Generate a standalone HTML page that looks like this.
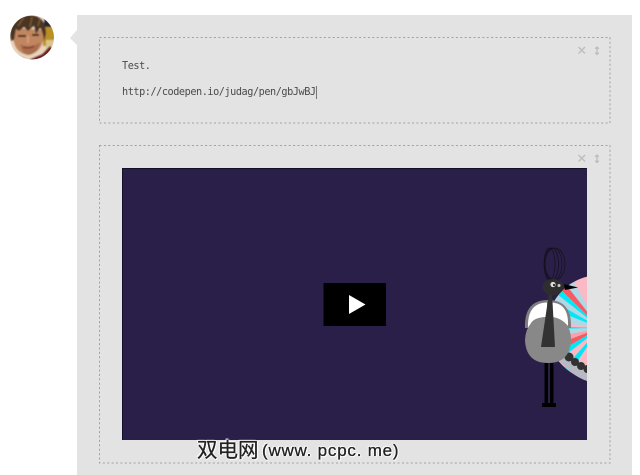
<!DOCTYPE html>
<html>
<head>
<meta charset="utf-8">
<style>
html,body{margin:0;padding:0;background:#fff;width:640px;height:475px;overflow:hidden}
body{position:relative}
.abs{position:absolute}
.panel{left:77px;top:15px;width:555px;height:460px;background:#e3e3e3}
.txt{font-family:"DejaVu Sans Mono",monospace;font-size:10.2px;letter-spacing:-0.44px;line-height:12px;color:#4a4a4a;white-space:pre}
.wm{font-family:"Liberation Sans","Noto Sans CJK SC",sans-serif;color:#222;white-space:pre;-webkit-text-stroke:0.3px #222;text-shadow:1px 0 0 #fff,-1px 0 0 #fff,0 1px 0 #fff,0 -1px 0 #fff,1px 1px 1px #fff,-1px -1px 1px #fff}
</style>
</head>
<body>
<div class="abs panel"></div>
<svg class="abs" style="left:0;top:0" width="80" height="70" viewBox="0 0 80 70">
  <polygon points="77,30 70,38 77,45" fill="#e3e3e3"/>
  <defs>
    <clipPath id="av"><circle cx="32" cy="37.500" r="22"/></clipPath>
    <filter id="bl" x="-10%" y="-10%" width="120%" height="120%"><feGaussianBlur stdDeviation="0.8"/></filter>
  </defs>
  <g clip-path="url(#av)">
    <g filter="url(#bl)">
      <rect x="8" y="13" width="48" height="50" fill="#e8d4bd"/>
      <rect x="43" y="26" width="13" height="20" fill="#bb9022"/>
      <rect x="44" y="14" width="12" height="13" fill="#20283a"/>
      <rect x="46" y="40" width="10" height="10" fill="#d9c48c"/>
      <path d="M14 54 L28 60 L42 54 L50 46 L56 52 L56 64 L10 64Z" fill="#6e1a1c"/>
      <path d="M13 34 Q13 53 28 55 Q42 53 44 36 L44 30 L14 28Z" fill="#c08660"/>
      <path d="M20 44 Q30 50 40 42 Q38 54 28 55 Q22 54 20 44Z" fill="#a86e4c"/>
      <path d="M10 36 Q9 17 28 15 Q46 14 46 34 L44 41 Q43 31 40 28 L36 34 L34 26 L28 31 L24 27 L19 31 L16 29 L14 40 L11 41Z" fill="#4a3420"/>
      <path d="M18 26 L24 17 M30 27 L32 17 M38 26 L40 19" stroke="#7a5a30" stroke-width="1.500"/>
      <path d="M18 36 h8 M32 35 h7" stroke="#3a261a" stroke-width="2"/>
      <path d="M28 36 v7" stroke="#d49c78" stroke-width="2"/>
      <path d="M23 47 q6 2 11 -1" stroke="#8a4038" stroke-width="1.800" fill="none"/>
    </g>
  </g>
</svg>

<svg class="abs" style="left:0;top:0" width="640" height="475" viewBox="0 0 640 475">
  <g fill="none" stroke="#a0a0a0" stroke-width="1" stroke-dasharray="2 2.400">
    <rect x="99.500" y="37.500" width="510.500" height="85.500"/>
    <rect x="99.500" y="145.500" width="510.500" height="317.500"/>
  </g>
  <g fill="none" stroke="#bcbcbc" stroke-width="1.300">
    <path d="M578.500 47l6.500 6.500M585 47l-6.500 6.500"/>
    <path d="M578.500 155l6.500 6.500M585 155l-6.500 6.500"/>
    <path d="M597 47v7.500M595.200 48.800l1.800-1.800 1.800 1.800M595.200 52.700l1.800 1.800 1.800-1.800"/>
    <path d="M597 155v7.500M595.200 156.800l1.800-1.800 1.800 1.800M595.200 160.700l1.800 1.800 1.800-1.800"/>
  </g>
</svg>

<div class="abs txt" style="left:122px;top:61px">Test.</div>
<div class="abs txt" style="left:122px;top:87px">http://codepen.io/judag/pen/gbJwBJ</div>
<div class="abs" style="left:316px;top:86px;width:1px;height:13px;background:#777"></div>

<svg class="abs" style="left:122px;top:168px" width="465" height="272" viewBox="122 168 465 272">
  <defs>
    <clipPath id="fan"><circle cx="600" cy="328" r="53"/></clipPath>
    <filter id="b2" x="-5%" y="-5%" width="110%" height="110%"><feGaussianBlur stdDeviation="0.3"/></filter>
  </defs>
  <rect x="122" y="168" width="465" height="272" fill="#2a1f49"/>
  <path d="M122.500 440V168.500H586.500" fill="none" stroke="#15102a" stroke-width="1"/>
  <rect x="323.500" y="283" width="62.500" height="43" fill="#000"/>
  <polygon points="349,295 349,314 365.500,304.500" fill="#fff"/>

  <g filter="url(#b2)">
  <g clip-path="url(#fan)">
    <rect x="540" y="268" width="60" height="125" fill="#f9b9c5"/>
    <polygon points="600,328 570,276 563,281" fill="#aed8e6"/>
    <polygon points="600,328 563,281 557,286" fill="#f55a62"/>
    <polygon points="600,328 557,286 553,291" fill="#00e8f5"/>
    <polygon points="600,328 553,291 548,298" fill="#aed8e6"/>
    <polygon points="600,328 548,298 544,306" fill="#00e8f5"/>
    <polygon points="600,328 544,306 541,320" fill="#aed8e6"/>
    <polygon points="600,328 540,326 540,329" fill="#00e8f5"/>
    <polygon points="600,328 540,329 541,340" fill="#aed8e6"/>
    <polygon points="600,328 541,340 544,349" fill="#f9a0a8"/>
    <polygon points="600,328 544,349 548,358" fill="#f55a62"/>
    <polygon points="600,328 548,358 553,365" fill="#00e8f5"/>
    <polygon points="600,328 560,373 566,378" fill="#00e8f5"/>
  </g>
  <path d="M558 359 Q570 375 587 381 L587 370 Q574 364 566 352Z" fill="#b9b9c4"/>
  <g fill="#333">
    <circle cx="569" cy="357" r="4.500"/><circle cx="575" cy="362" r="4"/>
    <circle cx="581" cy="366" r="4"/><path d="M587 365a3.500 4 0 0 0 0 8z"/>
  </g>

  <g fill="none" stroke="#16121f" stroke-width="0.700">
    <ellipse cx="555" cy="264" rx="10" ry="16"/>
    <ellipse cx="553.500" cy="264" rx="8.500" ry="16"/>
    <ellipse cx="551.500" cy="264" rx="7" ry="16"/>
    <ellipse cx="549.500" cy="264" rx="5.500" ry="16"/>
  </g>
  <path d="M525 328 Q524 300 548 300 Q572 300 571 328Z" fill="#7f7f7f"/>
  <path d="M528 328 Q527 303 547 302.500 L547 317 Q531 317 529 328Z" fill="#fff"/>
  <path d="M551 302.500 Q569 303 568 326 Q560 317 551 317Z" fill="#fff"/>
  <path d="M525 340 Q526 318 548 317 Q571 318 571 340 Q570 363 548 363 Q526 363 525 340Z" fill="#888"/>
  <polygon points="549,293 552,293 555,347 541,347" fill="#333"/>
  <ellipse cx="553" cy="287" rx="10.500" ry="8" fill="#2f2f2f"/>
  <circle cx="553" cy="284.500" r="2.600" fill="#ddd"/><circle cx="554" cy="285" r="1.100" fill="#222"/>
  <circle cx="559" cy="285.500" r="1.500" fill="#ccc"/>
  <polygon points="564,284 578,287.500 565,290" fill="#000"/>
  <rect x="544.500" y="363" width="3.500" height="41" fill="#000"/>
  <rect x="550" y="363" width="3.500" height="41" fill="#000"/>
  <rect x="542" y="403" width="14" height="4" fill="#000"/>
  </g>
</svg>

<div class="abs wm" style="left:197px;top:438px;font-size:20.500px;line-height:26px">双电网</div>
<div class="abs wm" style="left:262px;top:438px;font-size:17px;line-height:26px;letter-spacing:0.780px">(www. pcpc. me)</div>
</body>
</html>
